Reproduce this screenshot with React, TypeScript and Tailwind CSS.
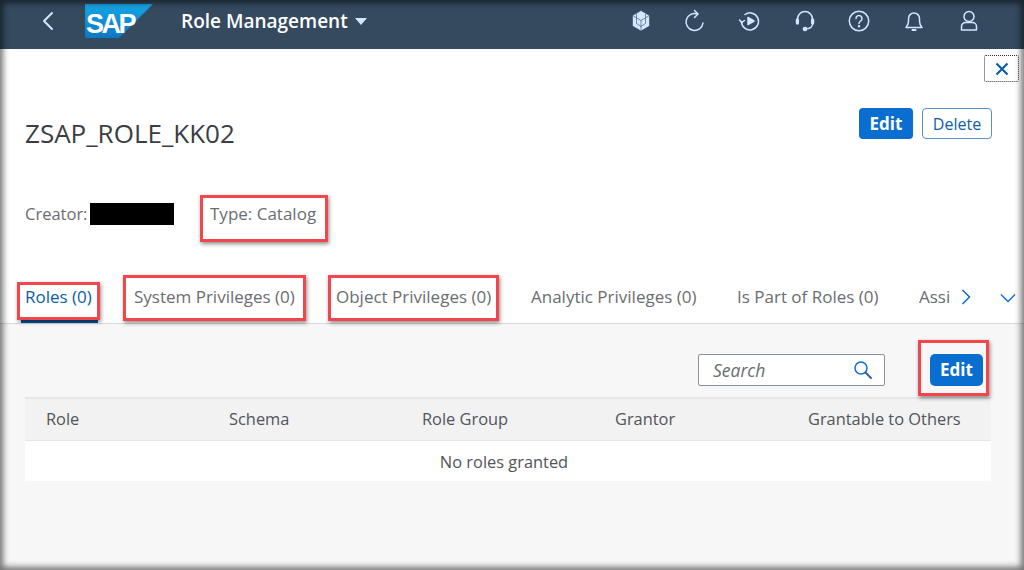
import React from "react";

const tabs = [
  { t: "Roles (0)", w: "w-[69px]", c: "text-[#0a5ea8]" },
  { t: "System Privileges (0)", w: "w-[162px]", c: "text-[#6a6d70]" },
  { t: "Object Privileges (0)", w: "w-[155px]", c: "text-[#6a6d70]" },
  { t: "Analytic Privileges (0)", w: "w-[166px]", c: "text-[#6a6d70]" },
  { t: "Is Part of Roles (0)", w: "w-[142px]", c: "text-[#6a6d70]" },
];
const cols = ["Role", "Schema", "Role Group", "Grantor", "Grantable to Others"];

function HIcon({ children }: { children: React.ReactNode }) {
  return (
    <svg width="24" height="24" viewBox="0 0 24 24" fill="none" stroke="#d1e8ff" strokeWidth="1.5" strokeLinecap="round" strokeLinejoin="round">
      {children}
    </svg>
  );
}

function Redbox({ cls }: { cls: string }) {
  return <div className={"absolute border-[3px] border-[#f2464c] shadow-[1px_2px_4px_rgba(0,0,0,0.45)] pointer-events-none " + cls} />;
}

export default function App() {
  return (
    <div className="relative w-[1024px] h-[570px] overflow-hidden bg-white font-['Open_Sans','Liberation_Sans',sans-serif] text-[16px]">
      <header className="h-[49px] bg-[#354a5f] flex items-center pl-[39px]">
        <svg width="16" height="20" viewBox="0 0 16 20" fill="none" stroke="#d1e8ff" strokeWidth="2" strokeLinecap="round" strokeLinejoin="round" className="mb-[7px]">
          <path d="M13 2 L5 10 L13 18" />
        </svg>
        <svg width="69" height="35" viewBox="0 0 69 35" className="ml-[30px] mb-[7px]">
          <defs>
            <linearGradient id="g" x1="0" y1="0" x2="0" y2="1">
              <stop offset="0" stopColor="#16a6e6" />
              <stop offset="1" stopColor="#0a78c2" />
            </linearGradient>
          </defs>
          <polygon points="0,0 68,0 34,34 0,34" fill="url(#g)" />
          <text x="1" y="28.5" fontFamily="Liberation Sans" fontWeight="700" fontSize="27" fill="#fff" letterSpacing="-2.5">SAP</text>
        </svg>
        <span className="ml-[27px] mb-[7px] text-[#fff] font-semibold text-[19px] whitespace-nowrap">Role Management</span>
        <svg width="12" height="8" viewBox="0 0 12 8" className="ml-[7px] mb-[5px]"><path d="M0 0H12L6 7Z" fill="#d1e8ff" /></svg>
        <div className="ml-auto mr-[43px] mb-[7px] flex items-center gap-[30.8px]">
          <svg width="24" height="24" viewBox="0 0 24 24" fill="#d1e8ff" stroke="#354a5f" strokeWidth="0.6" className="translate-x-[1px]">
            <path d="M12 1.5 L20.5 6.5 V17 L12 22 L3.5 17 V6.5 Z" />
            <path d="M3.8 6.7 L12 11.5 L20.2 6.7 M12 11.5 V21.5 M7.5 4.5 V14.5 L12 17.5 L16.5 14.5 V4.5" fill="none" />
          </svg>
          <HIcon><path d="M20 14a8.5 8.5 0 1 1-5.5-9" /><path d="M11.5 1.5 L15 5 L11.5 8.5" /></HIcon>
          <HIcon>
            <path d="M7 5.5A8.5 8.5 0 1 1 3.5 12.5" />
            <path d="M1.5 11 L3.8 13.5 L6.5 11.5" />
            <path d="M10 8.5 V15.5 L16 12 Z" fill="#d1e8ff" />
          </HIcon>
          <HIcon>
            <path d="M4.5 11 V10 a7.5 7.5 0 0 1 15 0 V14 a5 5 0 0 1 -4 5.5 H13" />
            <rect x="3.5" y="10" width="1.8" height="5" rx="0.9" fill="#d1e8ff" />
            <rect x="18.7" y="10" width="1.8" height="5" rx="0.9" fill="#d1e8ff" />
            <circle cx="12" cy="20" r="1.6" fill="#d1e8ff" />
          </HIcon>
          <HIcon>
            <circle cx="12" cy="12" r="9.7" />
            <path d="M9 9.5a3 3 0 1 1 4.6 2.5c-1 .7-1.6 1.2-1.6 2.6" />
            <circle cx="12" cy="17.3" r=".5" fill="#d1e8ff" />
          </HIcon>
          <HIcon>
            <path d="M4 18.5 c2-2 2.5-3.5 2.5-6.5 V9.5 a5.5 5.5 0 0 1 11 0 V12 c0 3 .5 4.5 2.5 6.5 Z" />
            <path d="M10.5 21 h3" strokeWidth="2" />
          </HIcon>
          <HIcon>
            <circle cx="12" cy="7.5" r="5" />
            <path d="M4.5 21 V17.5 a4 4 0 0 1 4-4 h7 a4 4 0 0 1 4 4 V21 Z" />
          </HIcon>
        </div>
      </header>

      <main className="h-[521px] flex flex-col">
        <div className="h-[226px] flex flex-col shrink-0">
          <div className="flex justify-end pr-[5px] pt-[6px]">
            <button className="w-[35px] h-[27px] border border-dotted border-[#333] rounded-[2px] flex items-center justify-center">
              <svg width="14" height="14" viewBox="0 0 14 14" fill="none" stroke="#0a5ea8" strokeWidth="2.2"><path d="M1.5 1.5 L12.5 12.5 M12.5 1.5 L1.5 12.5" /></svg>
            </button>
          </div>
          <div className="flex items-start justify-between pl-[25px] pr-[32px] mt-[26px]">
            <h1 className="text-[26px] leading-[32px] mt-[9px] text-[#3a3e42] font-normal">ZSAP_ROLE_KK02</h1>
            <div className="flex gap-[9px]">
              <button className="w-[54px] h-[31px] rounded-[4px] bg-[#0a6ed1] text-white font-bold text-[17px]">Edit</button>
              <button className="w-[70px] h-[31px] rounded-[4px] bg-white border border-[#5d8fc2] text-[#0a5ea8] text-[16px]">Delete</button>
            </div>
          </div>
          <div className="flex items-center pl-[25px] mt-[54px] text-[#6a6d70] h-[22px]">
            <span className="w-[65px] text-[16.5px]">Creator:</span>
            <span className="w-[84px] h-[22px] bg-black" />
            <span className="ml-[36px] text-[17px]">Type: Catalog</span>
          </div>
        </div>
        <nav className="h-[49px] shrink-0 border-b border-[#d9d9d9] flex items-center pl-[25px] relative bg-white text-[17px]">
          <div className="flex gap-[40px] w-[932px] overflow-hidden h-[24px] leading-[24px] mb-[4px]">
            {tabs.map((x) => (
              <span key={x.t} className={"shrink-0 whitespace-nowrap " + x.w + " " + x.c}>{x.t}</span>
            ))}
            <span className="shrink-0 text-[#6a6d70] w-[34px]">Assi</span>
          </div>
          <svg width="12" height="18" viewBox="0 0 12 18" fill="none" stroke="#0a6ed1" strokeWidth="1.5" className="ml-[3px] mb-[4px]"><path d="M2.5 2 L9.5 9 L2.5 16" /></svg>
          <svg width="18" height="10" viewBox="0 0 18 10" fill="none" stroke="#0a6ed1" strokeWidth="1.4" className="ml-[27px] mb-[2px]"><path d="M2 1.5 L9 8.5 L16 1.5" /></svg>
          <div className="absolute left-[21px] bottom-0 w-[77px] h-[3px] bg-[#0a4f9a]" />
        </nav>
        <section className="flex-1 bg-[#f7f7f7] pl-[25px] pr-[33px] pt-[30px]">
          <div className="flex items-center justify-end pr-[8px]">
            <div className="w-[187px] h-[32px] bg-white border border-[#89919a] rounded-[2px] flex items-center justify-between pl-[14px] pr-[11px]">
              <span className="italic text-[#6a6d70] text-[17.5px]">Search</span>
              <svg width="20" height="20" viewBox="0 0 20 20" fill="none" stroke="#0a6ed1" strokeWidth="1.5" strokeLinecap="round"><circle cx="8" cy="8" r="6" /><path d="M12.5 12.5 L18 18" stroke="#32628f" strokeWidth="2" /></svg>
            </div>
            <button className="ml-[45px] w-[53px] h-[32px] rounded-[5px] bg-[#0a6ed1] text-white font-bold text-[17px]">Edit</button>
          </div>
          <div className="mt-[11px] border-t-2 border-[#e6e6e6]">
            <div className="grid grid-cols-[183px_193px_193px_193px_1fr] h-[42px] items-center bg-[#f2f2f2] border-b border-[#e5e5e5] text-[#51555a] text-[16.4px]">
              {cols.map((c) => (
                <span key={c} className="pl-[21px] whitespace-nowrap">{c}</span>
              ))}
            </div>
            <div className="h-[40px] bg-white flex items-center justify-center text-[#51555a] text-[16.4px] pr-[8px] pt-[2px]">No roles granted</div>
          </div>
        </section>
      </main>

      <Redbox cls="left-[200px] top-[195px] w-[128px] h-[47px]" />
      <Redbox cls="left-[17px] top-[282px] w-[83px] h-[38px]" />
      <Redbox cls="left-[123px] top-[275px] w-[183px] h-[46px]" />
      <Redbox cls="left-[328px] top-[275px] w-[171px] h-[46px]" />
      <Redbox cls="left-[918px] top-[340px] w-[71px] h-[56px]" />
      <div className="absolute inset-0 pointer-events-none shadow-[inset_0_0_6px_3px_rgba(0,0,0,0.55)]" />
    </div>
  );
}
